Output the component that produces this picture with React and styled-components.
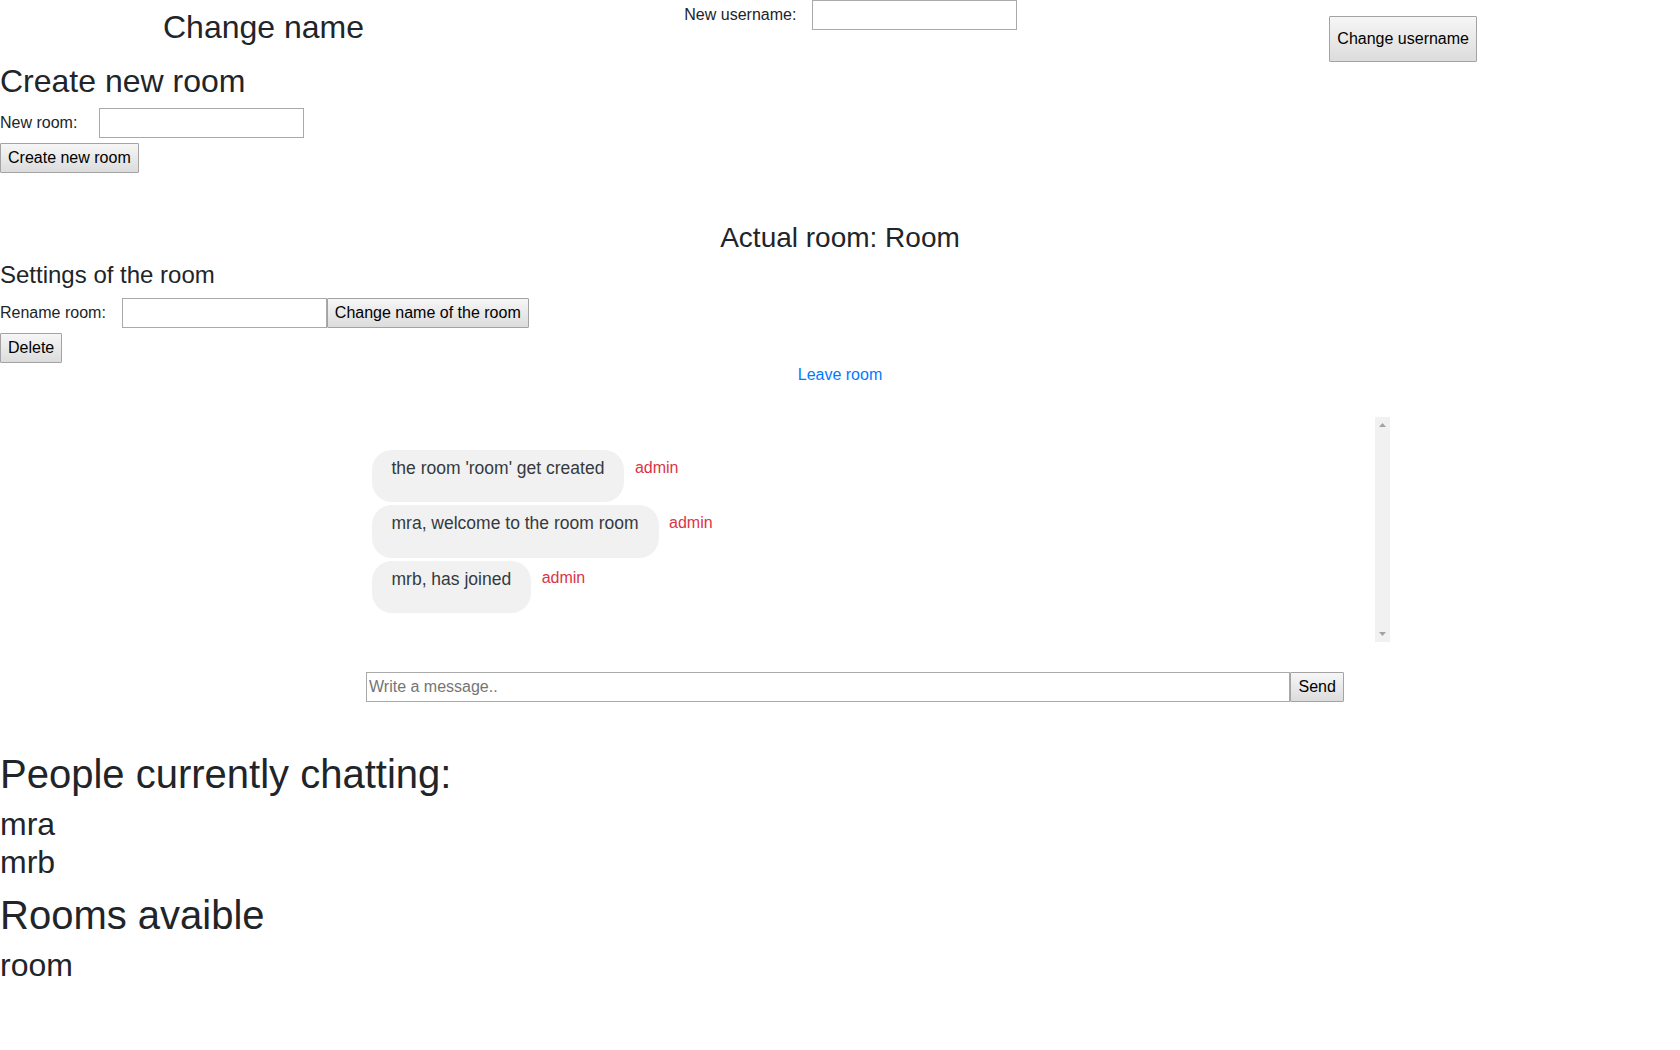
import React from "react";
import styled, { createGlobalStyle } from "styled-components";

const Global = createGlobalStyle`
  html, body { margin: 0; padding: 0; background: #fff; }
  body {
    font-family: "Liberation Sans", Arial, Helvetica, sans-serif;
    font-size: 16px;
    line-height: 1.5;
    color: #212529;
  }
  * { box-sizing: border-box; }
`;

const Page = styled.div`
  width: 1680px;
  padding-bottom: 60px;
`;

const TopRow = styled.div`
  display: flex;
  align-items: flex-start;
  height: 62px;
`;

const NameTitle = styled.h2`
  width: 527px;
  margin: 8px 0 0;
  font-size: 32px;
  font-weight: 400;
  line-height: 38.4px;
  text-align: center;
`;

const Field = styled.div`
  margin-left: ${(p) => p.$ml || 0}px;
  margin-top: ${(p) => p.$mt || 0}px;
  white-space: nowrap;
`;

const Label = styled.label`
  font-size: 16px;
`;

const TextInput = styled.input`
  display: inline-block;
  width: ${(p) => p.$w || 205}px;
  height: 30px;
  margin-left: ${(p) => p.$gap || 0}px;
  padding: 1px 2px;
  border: 1px solid #a9a9a9;
  border-radius: 0;
  font: 16px "Liberation Sans", Arial, sans-serif;
  color: #212529;
  background: #fff;
  vertical-align: baseline;
  &::placeholder { color: #757575; }
`;

const Button = styled.button`
  display: inline-block;
  height: ${(p) => p.$h || 30}px;
  margin-left: ${(p) => p.$ml || 0}px;
  margin-top: ${(p) => p.$mt || 0}px;
  padding: 0 ${(p) => p.$px || 7}px;
  border: 1px solid #a3a3a3;
  border-radius: 1px;
  background: linear-gradient(#f6f6f6, #dcdcdc);
  font: 16px "Liberation Sans", Arial, sans-serif;
  color: #000;
  vertical-align: baseline;
  cursor: pointer;
`;

const BlockButton = styled(Button)`
  display: block;
`;

const Heading2 = styled.h2`
  margin: 0 0 8px;
  font-size: 32px;
  font-weight: 400;
  line-height: 38.4px;
`;

const RoomTitle = styled.h3`
  margin: 47.1px 0 7.2px;
  font-size: 28px;
  font-weight: 400;
  line-height: 33.6px;
  text-align: center;
`;

const Heading4 = styled.h4`
  margin: 0 0 8px;
  font-size: 24px;
  font-weight: 400;
  line-height: 28.8px;
`;

const Heading1 = styled.h1`
  margin: ${(p) => p.$mt || 0}px 0 7px;
  font-size: 40px;
  font-weight: 400;
  line-height: 48px;
`;

const LinkLine = styled.div`
  text-align: center;
  line-height: 24px;
`;

const Link = styled.a`
  color: #007bff;
  text-decoration: none;
`;

const ChatColumn = styled.div`
  margin-left: 366px;
  width: 1024px;
`;

const ChatBox = styled.div`
  display: flex;
  margin-top: 30px;
  height: 225px;
`;

const Messages = styled.div`
  flex: 1;
  padding: 33px 0 0 5.5px;
  overflow: hidden;
`;

const ScrollTrack = styled.div`
  width: 15px;
  background: #f1f1f1;
  display: flex;
  flex-direction: column;
  justify-content: space-between;
  align-items: center;
  padding: 6px 0;
`;

const Arrow = ({ down }) => (
  <svg width="7" height="4" viewBox="0 0 7 4" style={{ display: "block" }}>
    <polygon points={down ? "0,0 7,0 3.5,4" : "3.5,0 7,4 0,4"} fill="#a3a3a3" />
  </svg>
);

const MessageRow = styled.div`
  display: flex;
  align-items: flex-start;
  gap: 10.5px;
  margin-bottom: 3px;
`;

const Bubble = styled.div`
  background: #f1f1f1;
  border-radius: 20px;
  padding: 5px 20px;
`;

const BubbleText = styled.p`
  margin: 0 0 16px;
  font-size: 17.5px;
  line-height: 26.25px;
  color: #343a40;
`;

const Author = styled.span`
  padding-top: 5.7px;
  font-size: 16px;
  line-height: 24px;
  color: #dc3545;
`;

const SendRow = styled.div`
  display: flex;
  margin-top: 30px;
  height: 30px;
`;

const List = styled.div`
  margin-bottom: ${(p) => p.$mb || 0}px;
`;

const ListItem = styled.div`
  font-size: 32px;
  line-height: 38.4px;
`;

const messages = [
  "the room 'room' get created",
  "mra, welcome to the room room",
  "mrb, has joined",
];

export default function App() {
  return (
    <Page>
      <Global />
      <TopRow>
        <NameTitle>Change name</NameTitle>
        <Field $ml={157.3}>
          <Label>New username:</Label>
          <TextInput type="text" $gap={16} />
        </Field>
        <Button $ml={312} $mt={16} $h={46}>Change username</Button>
      </TopRow>

      <Heading2>Create new room</Heading2>
      <Field>
        <Label>New room:</Label>
        <TextInput type="text" $gap={21.3} />
      </Field>
      <BlockButton $mt={5}>Create new room</BlockButton>

      <RoomTitle>Actual room: Room</RoomTitle>
      <Heading4>Settings of the room</Heading4>
      <Field>
        <Label>Rename room:</Label>
        <TextInput type="text" $gap={16} />
        <Button>Change name of the room</Button>
      </Field>
      <BlockButton $mt={5}>Delete</BlockButton>
      <LinkLine>
        <Link href="#">Leave room</Link>
      </LinkLine>

      <ChatColumn>
        <ChatBox>
          <Messages>
            {messages.map((m) => (
              <MessageRow key={m}>
                <Bubble>
                  <BubbleText>{m}</BubbleText>
                </Bubble>
                <Author>admin</Author>
              </MessageRow>
            ))}
          </Messages>
          <ScrollTrack>
            <Arrow />
            <Arrow down />
          </ScrollTrack>
        </ChatBox>
        <SendRow>
          <TextInput type="text" $w={924} placeholder="Write a message.." />
          <Button $px={7.5}>Send</Button>
        </SendRow>
      </ChatColumn>

      <Heading1 $mt={48}>People currently chatting:</Heading1>
      <List $mb={8.7}>
        <ListItem>mra</ListItem>
        <ListItem>mrb</ListItem>
      </List>
      <Heading1>Rooms avaible</Heading1>
      <List>
        <ListItem>room</ListItem>
      </List>
    </Page>
  );
}
